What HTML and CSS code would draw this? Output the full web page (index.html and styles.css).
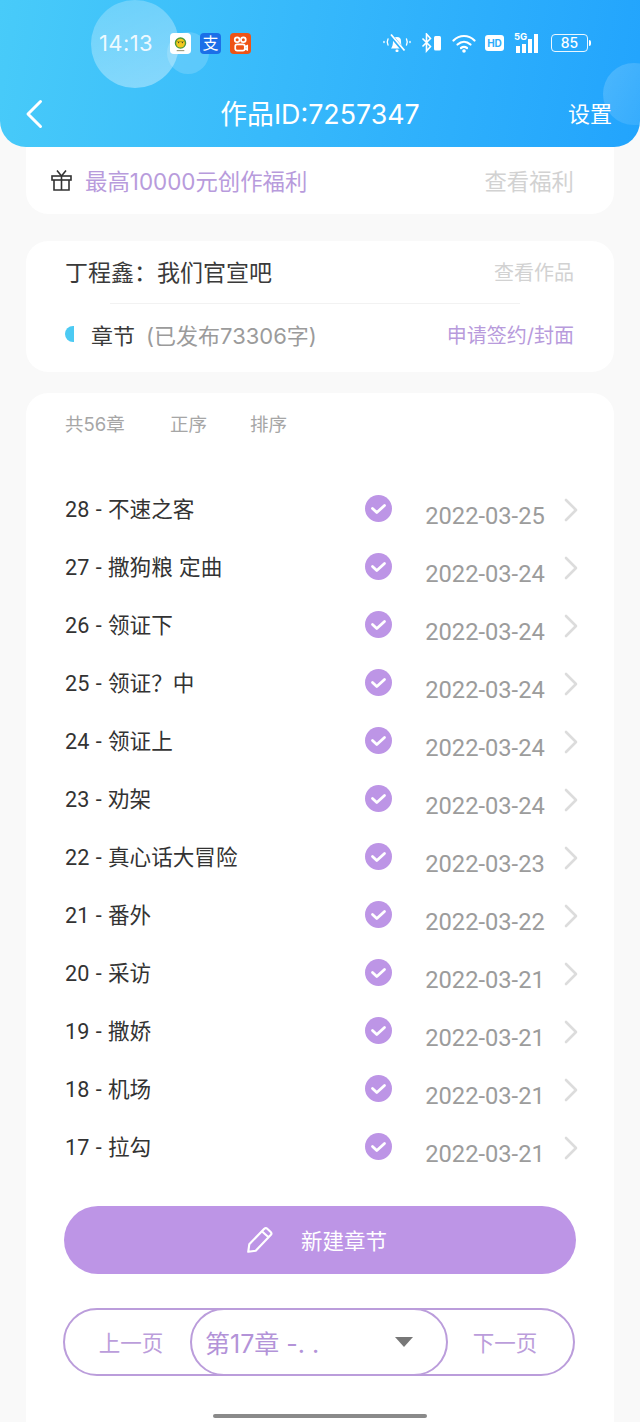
FILE: index.html
```html
<!DOCTYPE html>
<html lang="zh">
<head>
<meta charset="utf-8">
<title>作品</title>
<link rel="stylesheet" href="styles.css">
</head>
<body>
<div class="screen">
  <header class="header">
    <span class="bubble bubble-big"></span>
    <span class="bubble bubble-small"></span>
    <span class="bubble bubble-edge"></span>
    <div class="status">
      <span class="time">14:13</span>
      <div class="apps">
        <svg class="app" viewBox="0 0 22 22"><rect width="22" height="22" rx="4" fill="#fff"/><circle cx="11" cy="10.500" r="6" fill="#4c9a3a"/><circle cx="11" cy="10.500" r="4.600" fill="#f4c81e"/><path d="M6.500 9h9" stroke="#a8a018" stroke-width="1"/><circle cx="9" cy="10" r=".7" fill="#333"/><circle cx="13" cy="10" r=".7" fill="#333"/><rect x="7" y="18" width="8" height="1" fill="#8a8a6a"/></svg>
        <span class="app app-alipay">支</span>
        <svg class="app" viewBox="0 0 22 22"><rect width="22" height="22" rx="4" fill="#ee5316"/><g fill="none" stroke="#fff" stroke-width="1.800"><circle cx="7.500" cy="7" r="2.500"/><circle cx="14" cy="7" r="2.500"/><rect x="5.500" y="12" width="10" height="6.500" rx="2"/><path d="M15.500 14.500l2.500-1v4l-2.500-1"/></g></svg>
      </div>
      <div class="sys">
        <svg class="i-bell" viewBox="0 0 28 20"><path d="M8 15.500c1.500-2 2-4 2-7.500a4 4 0 0 1 8 0c0 3.500.5 5.500 2 7.500z" fill="#fff"/><rect x="12.500" y="16.500" width="3" height="2.500" rx="1" fill="#fff"/><path d="M7.500 2l13.500 16" stroke="#30b0fa" stroke-width="3.500"/><path d="M8 1.500l13.500 16" stroke="#fff" stroke-width="1.800"/><path d="M5 6c-1 2-1 4 0 6M23.500 6c1 2 1 4 0 6M1 8.500v1M27 8.500v1" stroke="#fff" stroke-width="1.400" fill="none" stroke-linecap="round"/></svg>
        <svg class="i-bt" viewBox="0 0 20 20"><path d="M1.500 5.500l8 8-4 4.500V1l4 4.500-8 8" fill="none" stroke="#fff" stroke-width="1.600"/><rect x="13" y="3" width="7" height="14.500" rx="1.500" fill="#fff"/></svg>
        <svg class="i-wifi" viewBox="0 0 25 20"><g fill="none" stroke="#fff" stroke-width="2.200" stroke-linecap="round"><path d="M1.500 7.500c6-6 15-6 21 0"/><path d="M5.500 11.500c4-3.500 9-3.500 13 0"/><path d="M9 15c2-1.500 4-1.500 6 0"/></g><circle cx="12" cy="18" r="1.800" fill="#fff"/></svg>
        <span class="hd">HD</span>
        <span class="signal"><span class="fiveg">5G</span><i class="b1"></i><i class="b2"></i><i class="b3"></i><i class="b4"></i></span>
        <span class="battery"><span class="batt-box">85</span><i class="batt-cap"></i></span>
      </div>
    </div>
    <nav class="nav">
      <svg class="back" viewBox="0 0 18 30"><path d="M15.500 2.500L3 15l12.500 12.500" fill="none" stroke="#fff" stroke-width="3" stroke-linecap="round" stroke-linejoin="round"/></svg>
      <h1 class="title">作品ID:7257347</h1>
      <span class="settings">设置</span>
    </nav>
  </header>

  <section class="card card-perk">
    <svg class="gift" viewBox="0 0 21 22"><g fill="none" stroke="#333" stroke-width="1.600"><rect x="1" y="7" width="19" height="4"/><path d="M3 11v10h15V11M10.500 7v14M6 1.500l4.500 5.500 4.500-5.500"/></g></svg>
    <span class="perk-text">最高10000元创作福利</span>
    <span class="muted-link perk-link">查看福利</span>
  </section>

  <section class="card card-work">
    <div class="work-row">
      <span class="work-title">丁程鑫：我们官宣吧</span>
      <span class="muted-link">查看作品</span>
    </div>
    <div class="divider"></div>
    <div class="chapter-row">
      <i class="half-dot"></i>
      <span class="chapter-label">章节</span>
      <span class="chapter-count">(已发布73306字)</span>
      <span class="sign-link">申请签约/封面</span>
    </div>
  </section>

  <section class="card card-list">
    <div class="list-head"><span class="h-total">共56章</span><span class="h-order">正序</span><span>排序</span></div>
    <ul class="rows">
      <li class="row"><span class="name">28 - 不速之客</span><svg class="check" viewBox="0 0 27 27"><use href="#chk"/></svg><span class="date">2022-03-25</span><svg class="arrow" viewBox="0 0 14 24"><use href="#arw"/></svg></li>
      <li class="row"><span class="name">27 - 撒狗粮 定曲</span><svg class="check" viewBox="0 0 27 27"><use href="#chk"/></svg><span class="date">2022-03-24</span><svg class="arrow" viewBox="0 0 14 24"><use href="#arw"/></svg></li>
      <li class="row"><span class="name">26 - 领证下</span><svg class="check" viewBox="0 0 27 27"><use href="#chk"/></svg><span class="date">2022-03-24</span><svg class="arrow" viewBox="0 0 14 24"><use href="#arw"/></svg></li>
      <li class="row"><span class="name">25 - 领证？中</span><svg class="check" viewBox="0 0 27 27"><use href="#chk"/></svg><span class="date">2022-03-24</span><svg class="arrow" viewBox="0 0 14 24"><use href="#arw"/></svg></li>
      <li class="row"><span class="name">24 - 领证上</span><svg class="check" viewBox="0 0 27 27"><use href="#chk"/></svg><span class="date">2022-03-24</span><svg class="arrow" viewBox="0 0 14 24"><use href="#arw"/></svg></li>
      <li class="row"><span class="name">23 - 劝架</span><svg class="check" viewBox="0 0 27 27"><use href="#chk"/></svg><span class="date">2022-03-24</span><svg class="arrow" viewBox="0 0 14 24"><use href="#arw"/></svg></li>
      <li class="row"><span class="name">22 - 真心话大冒险</span><svg class="check" viewBox="0 0 27 27"><use href="#chk"/></svg><span class="date">2022-03-23</span><svg class="arrow" viewBox="0 0 14 24"><use href="#arw"/></svg></li>
      <li class="row"><span class="name">21 - 番外</span><svg class="check" viewBox="0 0 27 27"><use href="#chk"/></svg><span class="date">2022-03-22</span><svg class="arrow" viewBox="0 0 14 24"><use href="#arw"/></svg></li>
      <li class="row"><span class="name">20 - 采访</span><svg class="check" viewBox="0 0 27 27"><use href="#chk"/></svg><span class="date">2022-03-21</span><svg class="arrow" viewBox="0 0 14 24"><use href="#arw"/></svg></li>
      <li class="row"><span class="name">19 - 撒娇</span><svg class="check" viewBox="0 0 27 27"><use href="#chk"/></svg><span class="date">2022-03-21</span><svg class="arrow" viewBox="0 0 14 24"><use href="#arw"/></svg></li>
      <li class="row"><span class="name">18 - 机场</span><svg class="check" viewBox="0 0 27 27"><use href="#chk"/></svg><span class="date">2022-03-21</span><svg class="arrow" viewBox="0 0 14 24"><use href="#arw"/></svg></li>
      <li class="row"><span class="name">17 - 拉勾</span><svg class="check" viewBox="0 0 27 27"><use href="#chk"/></svg><span class="date">2022-03-21</span><svg class="arrow" viewBox="0 0 14 24"><use href="#arw"/></svg></li>
    </ul>
    <button class="new-btn">
      <svg class="pencil" viewBox="0 0 28 28"><path d="M3 25l1-7L18 3.500a2 2 0 0 1 2.800 0l3.200 3a2 2 0 0 1 0 2.800L10 24z M16 6l6 5.500" fill="none" stroke="#fff" stroke-width="2" stroke-linejoin="round"/></svg>
      <span class="new-label">新建章节</span>
    </button>
    <div class="pager">
      <span class="page-btn page-prev">上一页</span>
      <div class="select"><span class="select-text">第17章 -. .</span><i class="caret"></i></div>
      <span class="page-btn page-next">下一页</span>
    </div>
  </section>
  <div class="home-bar"></div>
</div>
<svg class="defs" width="0" height="0">
  <defs>
    <g id="chk"><circle cx="13.500" cy="13.500" r="13.500" fill="#bd95e6"/><path d="M7.500 13.500l4.300 4 7.700-7" fill="none" stroke="#fff" stroke-width="2.800" stroke-linecap="round" stroke-linejoin="round"/></g>
    <path id="arw" d="M2 2l10 10L2 22" fill="none" stroke="#dcdcdc" stroke-width="2.600" stroke-linecap="round" stroke-linejoin="round"/>
  </defs>
</svg>
</body>
</html>
```

FILE: styles.css
```css
* { box-sizing: border-box; margin: 0; padding: 0; }
html, body { width: 640px; height: 1422px; overflow: hidden; }
body {
  background: #f9f9f9;
  font-family: Inter, "Noto Sans CJK SC", "Noto Sans", sans-serif;
  color: #333;
}
.screen { position: relative; width: 640px; height: 1422px; overflow: hidden; display: flex; flex-direction: column; }
.defs { position: absolute; }

.header {
  position: relative;
  flex: none;
  height: 147px;
  overflow: hidden;
  border-radius: 0 0 26px 26px;
  background: linear-gradient(100deg, #48cbf9 0%, #37b9fb 45%, #22a4fd 100%);
  color: #fff;
}
.bubble { position: absolute; border-radius: 50%; }
.bubble-big { left: 91px; top: 0; width: 88px; height: 88px; background: linear-gradient(160deg, rgba(255,255,255,.22), rgba(255,255,255,.38)); }
.bubble-small { left: 167px; top: 32px; width: 42px; height: 42px; background: rgba(255,255,255,.17); }
.bubble-edge { left: 603px; top: 63px; width: 62px; height: 62px; background: linear-gradient(120deg, rgba(255,255,255,.18), rgba(255,255,255,.06)); }

.status { position: relative; display: flex; align-items: center; height: 86px; padding: 0 49px 0 99px; }
.time { font-size: 22px; letter-spacing: .4px; color: rgba(255,255,255,.88); width: 71px; white-space: nowrap; }
.apps { display: flex; gap: 9px; }
.app { display: block; width: 21px; height: 21px; }
.app-alipay { background: #1b6fe8; border-radius: 4px; color: #fff; font-size: 16px; line-height: 21px; text-align: center; }
.sys { margin-left: auto; display: flex; align-items: center; }
.i-bell { width: 28px; height: 20px; margin-right: 10px; }
.i-bt { width: 20px; height: 20px; margin-right: 11px; }
.i-wifi { width: 25px; height: 20px; margin-right: 8px; }
.hd { width: 19px; height: 16px; background: #fff; color: #2cadfb; border-radius: 3px; font-size: 10px; font-weight: 700; line-height: 16px; text-align: center; margin-right: 10px; }
.signal { position: relative; display: flex; align-items: flex-end; gap: 2.500px; width: 28px; height: 20px; margin-right: 9px; padding-left: 2px; }
.signal i { display: block; width: 3.500px; background: #fff; }
.fiveg { position: absolute; left: 0; top: -2px; font-size: 9.500px; font-weight: 700; line-height: 12px; }
.b1 { height: 7px; } .b2 { height: 9px; } .b3 { height: 14px; } .b4 { height: 19px; }
.battery { display: flex; align-items: center; width: 40px; }
.batt-box { width: 37px; height: 18px; border: 1.500px solid rgba(255,255,255,.9); border-radius: 4px; font-size: 14px; font-weight: 500; line-height: 15px; text-align: center; }
.batt-cap { width: 2px; height: 6px; margin-left: 1px; background: #fff; border-radius: 0 2px 2px 0; }

.nav { position: relative; display: flex; align-items: center; justify-content: center; height: 56px; }
.back { position: absolute; left: 25px; top: 13px; width: 18px; height: 30px; }
.title { font-size: 26.800px; font-weight: 400; line-height: 56px; }
.settings { position: absolute; right: 28px; top: 0; font-size: 22px; line-height: 56px; }

.card { background: #fff; margin: 0 26px; border-radius: 22px; }
.card-perk { flex: none; height: 67px; display: flex; align-items: center; padding: 0 40px 2px 25px; border-radius: 0 0 22px 22px; }
.gift { width: 21px; height: 22px; margin-right: 13px; }
.perk-text { font-size: 22.400px; color: #b89bdc; }
.muted-link { font-size: 20px; color: #d2d2d2; }
.perk-link { margin-left: auto; font-size: 22.400px; }

.card-work { flex: none; margin-top: 27px; height: 131px; padding: 0 40px 0 39px; }
.work-row { display: flex; justify-content: space-between; align-items: center; height: 62px; padding-bottom: 2px; }
.work-title { font-size: 23px; color: #3a3a3a; }
.divider { height: 1px; margin: 0 54px 0 45px; background: #f2f2f2; }
.chapter-row { display: flex; align-items: center; height: 67px; padding-bottom: 7px; }
.half-dot { width: 9px; height: 16px; margin-right: 17px; background: #4ccaf3; border-radius: 8px 0 0 8px; }
.chapter-label { font-size: 22px; color: #3a3a3a; margin-right: 11px; }
.chapter-count { font-size: 22px; color: #9b9b9b; }
.sign-link { margin-left: auto; font-size: 20px; color: #b89bdc; }

.card-list { flex: 1; margin-top: 21px; padding: 0 35px 0 38px; border-radius: 22px 22px 0 0; }
.list-head { display: flex; height: 87px; padding: 19px 0 0 1px; font-size: 18.500px; line-height: 25px; color: #a6a6a6; }
.h-total { width: 105px; }
.h-order { width: 80px; }

.rows { list-style: none; }
.row { display: flex; align-items: flex-start; height: 58px; padding-left: 1px; }
.name { width: 300px; flex: none; font-family: Roboto, "Noto Sans CJK SC", sans-serif; font-size: 21.600px; word-spacing: 1px; line-height: 30px; margin-top: 15px; color: #333; white-space: nowrap; }
.check { width: 27px; height: 27px; margin-top: 15px; flex: none; }
.date { width: 158px; flex: none; margin: 21px 0 0 14px; font-family: Roboto, "Noto Sans", sans-serif; font-size: 23.700px; line-height: 30px; text-align: center; color: #9c9c9c; white-space: nowrap; }
.arrow { width: 14px; height: 24px; margin-top: 18px; flex: none; }

.new-btn {
  display: flex; align-items: center; justify-content: center; gap: 27px;
  width: 512px; height: 68px; margin-top: 30px;
  border: 0; border-radius: 34px; background: #bd95e6; color: #fff;
  font-family: inherit; font-size: 21.500px;
}
.new-label { padding-bottom: 2px; }
.pencil { width: 30px; height: 30px; margin: 0 -1px 0 -8px; }

.pager { position: relative; display: flex; align-items: center; width: 512px; height: 68px; margin: 34px 0 0 -1px; border: 2px solid #bb9ddb; border-radius: 34px; }
.page-btn { font-size: 21.500px; text-align: center; color: #bb9ddb; padding-bottom: 2px; }
.page-prev { flex: 0 0 125px; padding-left: 7px; }
.page-next { flex: 1; padding-right: 11px; }
.select { flex: none; display: flex; align-items: center; justify-content: space-between; width: 258px; height: 68px; margin: -2px 0; padding: 0 33px 0 13px; background: #fff; border: 2px solid #bb9ddb; border-radius: 34px; }
.select-text { font-size: 25px; color: #b393d8; white-space: nowrap; }
.caret { width: 0; height: 0; border-left: 9px solid transparent; border-right: 9px solid transparent; border-top: 10px solid #777; }

.home-bar { position: absolute; left: 213px; top: 1414px; width: 214px; height: 4px; border-radius: 2px; background: #8a8a8a; }
```
